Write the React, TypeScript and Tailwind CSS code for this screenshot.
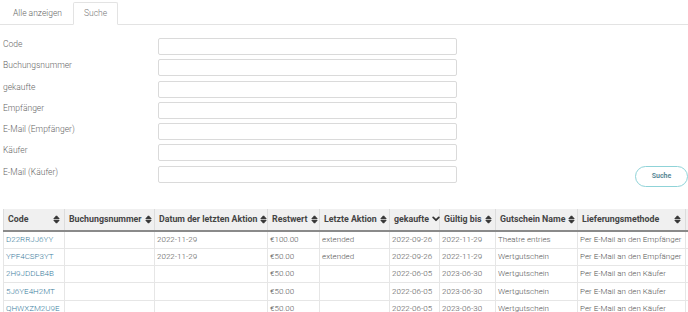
import React from "react";

const fields = [
  "Code",
  "Buchungsnummer",
  "gekaufte",
  "Empfänger",
  "E-Mail (Empfänger)",
  "Käufer",
  "E-Mail (Käufer)",
];

type Col = { label: string; w: number; sort: "both" | "desc" };

const cols: Col[] = [
  { label: "Code", w: 61, sort: "both" },
  { label: "Buchungsnummer", w: 90, sort: "both" },
  { label: "Datum der letzten Aktion", w: 113, sort: "both" },
  { label: "Restwert", w: 52, sort: "both" },
  { label: "Letzte Aktion", w: 70, sort: "both" },
  { label: "gekaufte", w: 50, sort: "desc" },
  { label: "Gültig bis", w: 56, sort: "both" },
  { label: "Gutschein Name", w: 82, sort: "both" },
  { label: "Lieferungsmethode", w: 108, sort: "both" },
  { label: "", w: 60, sort: "both" },
];

const rows = [
  ["D22RRJJ6YY", "", "2022-11-29", "€100.00", "extended", "2022-09-26", "2022-11-29", "Theatre entries", "Per E-Mail an den Empfänger", ""],
  ["YPF4CSP3YT", "", "2022-11-29", "€50.00", "extended", "2022-09-26", "2022-11-29", "Wertgutschein", "Per E-Mail an den Empfänger", ""],
  ["2H9JDDLB4B", "", "", "€50.00", "", "2022-06-05", "2023-06-30", "Wertgutschein", "Per E-Mail an den Käufer", ""],
  ["5J6YE4H2MT", "", "", "€50.00", "", "2022-06-05", "2023-06-30", "Wertgutschein", "Per E-Mail an den Käufer", ""],
  ["QHWXZM2U9E", "", "", "€50.00", "", "2022-06-05", "2023-06-30", "Wertgutschein", "Per E-Mail an den Käufer", ""],
];

function SortIcon({ dir }: { dir: "both" | "desc" }) {
  if (dir === "desc") {
    return (
      <svg width="8" height="6" viewBox="0 0 10 7" className="shrink-0">
        <path d="M1.5 1.5 L5 5 L8.5 1.5" fill="none" stroke="#333" strokeWidth="2.2" strokeLinecap="round" strokeLinejoin="round" />
      </svg>
    );
  }
  return (
    <svg width="7" height="9" viewBox="0 0 10 13" className="shrink-0">
      <path d="M5 1.2 L8.8 5.3 H1.2 Z" fill="#333" stroke="#333" strokeWidth="1.4" strokeLinejoin="round" />
      <path d="M1.2 7.7 H8.8 L5 11.8 Z" fill="#333" stroke="#333" strokeWidth="1.4" strokeLinejoin="round" />
    </svg>
  );
}

export default function App() {
  return (
    <div className="w-[688px] h-[312px] overflow-hidden bg-white text-[#555] font-['Roboto',sans-serif]">
      {/* tabs */}
      <div className="flex items-end h-[25px] px-[2px] pt-[2px] border-b border-[#e3e3e3]">
        <div className="px-[10px] h-[22px] flex items-center text-[8.5px] text-[#666] font-light mr-[1px] ml-[1px]">
          Alle anzeigen
        </div>
        <div className="px-[10px] h-[23px] -mb-[1px] flex items-center text-[8.5px] text-[#777] font-light bg-white border border-b-white border-[#e3e3e3] rounded-t-[2px]">
          Suche
        </div>
      </div>

      {/* search form */}
      <div className="flex pl-[3px] pt-[13px]">
        <div className="flex flex-col gap-[4.3px]">
          {fields.map((f) => (
            <div key={f} className="flex items-start h-[17px]">
              <span className="w-[155px] text-[8.5px] text-[#666] font-light leading-[12px]">{f}</span>
              <input className="w-[299px] h-[17px] border border-[#dadada] rounded-[2px] bg-white outline-none" />
            </div>
          ))}
        </div>
        <div className="flex-1 flex justify-end items-end">
          <button className="w-[53px] h-[21px] mb-[-4px] rounded-full border border-[#8fd3d8] bg-white text-[7px] font-bold text-[#5b8a97]">
            Suche
          </button>
        </div>
      </div>

      {/* results table */}
      <div className="mt-[26px] pl-[3px]">
        <table className="border-collapse table-fixed" style={{ width: cols.reduce((a, c) => a + c.w, 0) }}>
          <colgroup>
            {cols.map((c, i) => (
              <col key={i} style={{ width: c.w }} />
            ))}
          </colgroup>
          <thead>
            <tr className="bg-[#f0f0f0] h-[22px] border-b-2 border-[#8a8a8a]">
              {cols.map((c, i) => (
                <th key={i} className="border-x border-[#dcdcdc] px-[4px] text-left font-bold text-[8.8px] text-[#444] whitespace-nowrap">
                  {c.label && (
                    <div className="flex items-center justify-between gap-[3px]">
                      <span>{c.label}</span>
                      <SortIcon dir={c.sort} />
                    </div>
                  )}
                </th>
              ))}
            </tr>
          </thead>
          <tbody>
            {rows.map((r, ri) => (
              <tr key={ri} className="h-[17.4px] border-b border-[#e6e6e6]">
                {r.map((v, ci) => (
                  <td
                    key={ci}
                    className={`border-x border-[#e6e6e6] px-[2px] text-[8px] font-light whitespace-nowrap overflow-hidden ${
                      ci === 0 ? "text-[#3c7e9e]" : "text-[#555]"
                    }`}
                  >
                    {v}
                  </td>
                ))}
              </tr>
            ))}
          </tbody>
        </table>
      </div>
    </div>
  );
}
